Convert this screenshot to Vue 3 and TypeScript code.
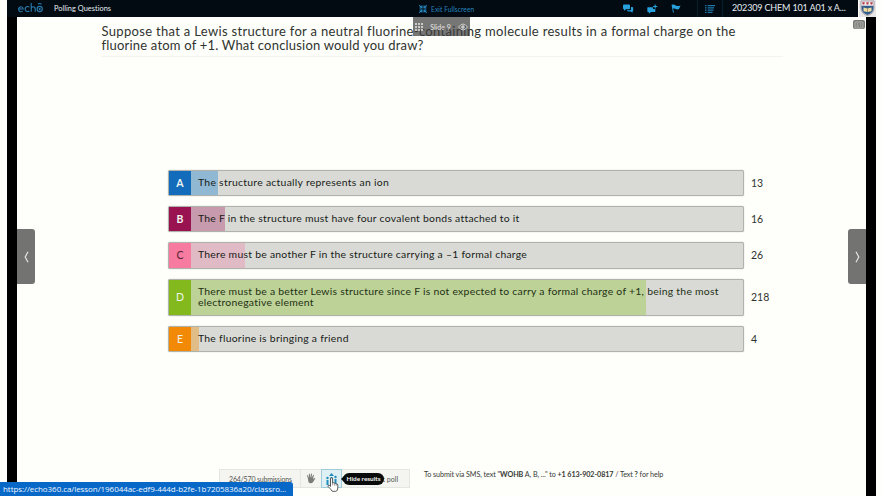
<script setup lang="ts">
interface Answer { key: string; text: string; votes: number; tone: string; fill: number }

const answers: Answer[] = [
  { key: 'A', text: 'The structure actually represents an ion', votes: 13, tone: 'blue', fill: 27 },
  { key: 'B', text: 'The F in the structure must have four covalent bonds attached to it', votes: 16, tone: 'plum', fill: 33.5 },
  { key: 'C', text: 'There must be another F in the structure carrying a –1 formal charge', votes: 26, tone: 'pink', fill: 54 },
  { key: 'D', text: 'There must be a better Lewis structure since F is not expected to carry a formal charge of +1, being the most\nelectronegative element', votes: 218, tone: 'green', fill: 455 },
  { key: 'E', text: 'The fluorine is bringing a friend', votes: 4, tone: 'orange', fill: 8 },
]
</script>

<template>
  <div class="screen">
    <header class="bar">
      <svg class="logo" viewBox="0 0 26 12" fill="none" stroke="#2a7db0" stroke-width="1.1">
        <path d="M.8 7H5.2A2.3 2.5 0 1 0 4.6 9M11.3 5.2A2.4 2.5 0 1 0 11.3 8.8M13.2 1V9.8M13.2 6.8Q13.4 4.7 15.2 4.7Q17.2 4.7 17.2 7V9.8M20 2.2Q21.7 .8 23.5 2.2" />
        <circle cx="21.7" cy="7" r="2.6" /><circle cx="21.7" cy="7" r=".5" />
      </svg>
      <span class="page-name">Polling Questions</span>
      <div class="exit">
        <svg width="8" height="8" viewBox="0 0 8 8" fill="none" stroke="#2585bd" stroke-width="1.1"><path d="M.2.2 3 3M3 .5V3H.5M7.8.2 5 3M5 .5V3H7.5M.2 7.8 3 5M3 7.5V5H.5M7.8 7.8 5 5M5 7.5V5H7.5" /></svg>
        <span>Exit Fullscreen</span>
      </div>
      <div class="tools">
        <svg width="11" height="9" viewBox="0 0 11 9" fill="#27a0dc"><path d="M1 .5H6Q7 .5 7 1.5V4.3Q7 5.2 6 5.2H3L1 6.8V5.2Q0 5.2 0 4.2V1.5Q0 .5 1 .5Z" /><path d="M8 3H9.2Q10.2 3 10.2 4V6.5Q10.2 7.2 9.5 7.4V8.8L7.8 7.4H4.8Q4 7.4 4 6.3H7Q8 6.3 8 5Z" /></svg>
        <svg width="11" height="10" viewBox="0 0 11 10" fill="#27a0dc"><path d="M.5 3.3H6V5H8.3V7.4Q8.3 8 7.5 8H4L1.8 9.8V8H1Q.3 8 .3 7.2V3.8ZM7.6.5H8.7V2H10.3V3.1H8.7V4.6H7.6V3.1H6.1V2H7.6Z" /></svg>
        <svg width="10" height="9" viewBox="0 0 10 9"><path d="M.5.7Q3-.1 4.8 1.4Q6.6 2.6 9.5 1.4L8 5.1Q6.2 5.9 4.4 4.8Q3.3 4.2 2 4.5L3 8.5H2Z" fill="#27a0dc" /></svg>
      </div>
      <div class="list-tool">
        <svg width="10" height="8" viewBox="0 0 10 8" stroke="#1d76a8" stroke-width="1.2"><path d="M0 .7H1.5M2.6.7H10M0 2.9H1.5M2.6 2.9H9M0 5.1H1.5M2.6 5.1H8.5M0 7.3H1.5M2.6 7.3H7.5" /></svg>
      </div>
      <span class="course">202309 CHEM 101 A01 x A...</span>
    </header>
    <svg class="crest" width="17" height="17" viewBox="0 0 17 17">
      <rect width="17" height="17" fill="#e9e6e7" />
      <path d="M2 1H15V8Q15 13.8 8.5 15.7Q2 13.8 2 8Z" fill="#f2eeee" stroke="#777480" stroke-width=".6" />
      <path d="M3.2 2.3H5.8L5.3 4.5H3.7ZM7.2 2.3H9.8L9.3 4.5H7.7ZM11.2 2.3H13.8L13.3 4.5H11.7Z" fill="#b53741" />
      <path d="M2.5 5.8H14.5V8Q14.5 13 8.5 15Q2.5 13 2.5 8Z" fill="#345c88" />
      <path d="M4.5 7.6 8.5 8.4 12.5 7.6V11.2L8.5 12 4.5 11.2Z" fill="#efdda3" /><path d="M8.5 8.4V12" stroke="#766548" stroke-width=".6" />
    </svg>

    <main class="slide">
      <h1 class="question"><span class="first">Suppose that a Lewis structure for a neutral fluorine-containing molecule results in a formal charge on the</span><br>fluorine atom of +1. What conclusion would you draw?</h1>

      <section class="answers">
        <div v-for="a in answers" :key="a.key" class="answer" :class="[a.tone, 'row-' + a.key]">
          <div class="box">
            <span class="letter">{{ a.key }}</span>
            <div class="body">
              <div class="fill" :style="{ width: a.fill + 'px' }"></div>
              <span class="text">{{ a.text }}</span>
            </div>
          </div>
          <span class="votes">{{ a.votes }}</span>
        </div>
      </section>

      <footer class="foot">
        <div class="controls">
          <span class="submissions">264/570 submissions</span>
          <span class="hand"><svg width="10" height="11" viewBox="0 0 10 11"><path d="M2 6 1 2.5Q1.2 1.8 1.8 2.3L3 5 2.8 1Q3.3.2 3.8 1L4.3 4.8 5 .8Q5.6.2 6 1L5.6 5 7.2 1.8Q7.9 1.6 7.9 2.4L6.9 6.1 8.7 4.9Q9.7 4.8 9.2 5.6L7 9.2Q5.5 10.7 3.5 10 2 9.3 2 6Z" fill="#7b7c79" /></svg></span>
          <span class="chart"><svg width="11" height="12" viewBox="0 0 11 12" fill="#218bbb"><path d="M.5 7H2.5V12H.5ZM4.5 4H6.5V12H4.5ZM8.5 6H10.5V12H8.5ZM5.5 0 8 3H3Z" /><circle cx="1.5" cy="5" r="1.2" /><circle cx="9.5" cy="4" r="1.2" /></svg></span>
          <span class="reset">Reset poll</span>
        </div>
        <p class="sms">To submit via SMS, text "<b>WOHB</b> A, B, ..." to <b>+1 613-902-0817</b> / Text <b>?</b> for help</p>
      </footer>
    </main>

    <div class="slide-tab">
      <svg width="8" height="8" viewBox="0 0 8 8" fill="#c9c9c9"><path d="M0 0H2V2H0ZM3 0H5V2H3ZM6 0H8V2H6ZM0 3H2V5H0ZM3 3H5V5H3ZM6 3H8V5H6ZM0 6H2V8H0ZM3 6H5V8H3ZM6 6H8V8H6Z" /></svg>
      <span>Slide 9</span>
      <svg width="10" height="8" viewBox="0 0 10 8" fill="none" stroke="#c9c9c9"><path d="M.5 4Q5-2 9.5 4Q5 10 .5 4Z" /><circle cx="5" cy="4" r="1.3" fill="#c9c9c9" /></svg>
    </div>
    <div class="caption-button"><svg width="10" height="8" viewBox="0 0 10 8" fill="none" stroke="#d4d4d0"><rect x="1" y="1" width="8" height="6" rx=".8" stroke-width=".7" /><path d="M2.5 3H4.3M5.5 3H7.5M2.5 5H5M6 5H7.5" stroke-width=".8" /></svg></div>
    <div class="arrow prev"><svg width="5" height="12" viewBox="0 0 5 12"><path d="M4 .7 1.2 6 4 11.3" fill="none" stroke="#e5e5e3" stroke-width="1.2" /></svg></div>
    <div class="arrow next"><svg width="5" height="12" viewBox="0 0 5 12"><path d="M1 .7 3.8 6 1 11.3" fill="none" stroke="#e5e5e3" stroke-width="1.2" /></svg></div>
    <div class="tooltip">Hide results</div>
    <svg class="cursor" width="12" height="15" viewBox="0 0 12 15"><path d="M3.5 9.5V2Q3.5.8 4.5.8T5.6 2V6Q6.2 5.2 7.2 6.3 8.3 5.6 9 6.9 10.8 6.5 10.8 8.5V11Q10.6 14.3 8.8 14.3H5.2Q4.4 12.7 1 9.4.9 7.9 2.2 8.2Z" fill="white" stroke="#333" stroke-width=".8" /><path d="M5.6 6V8.5M7.4 6.5V8.7M9.1 7V9" stroke="#555" stroke-width=".5" /></svg>
    <div class="link-preview">https://echo360.ca/lesson/196044ac-edf9-444d-b2fe-1b7205836a20/classro...</div>
  </div>
</template>

<style>
body { margin: 0; overflow: hidden; background: #fefefb; }
</style>

<style scoped>
* { box-sizing: border-box; }
svg { display: block; flex: none; }
.screen { position: relative; width: 883px; height: 496px; padding: 0 7px; background: #fefefb; overflow: hidden; font-family: Lato, "Liberation Sans", sans-serif; color: #20231f; white-space: nowrap; display: grid; grid-template-columns: 851px 18px; grid-template-rows: 17px 479px; }
.bar { height: 17px; background: #020a12; display: flex; align-items: center; color: #e7edf1; }
.logo { width: 26px; height: 12px; margin-left: 11px; margin-top: -2px; }
.page-name { font-size: 7.4px; margin-left: 10px; width: 57px; letter-spacing: .03px; line-height: 15px; height: 16px; }
.exit { display: flex; align-items: center; gap: 4px; margin-left: 308px; width: 70px; color: #2585bd; font-size: 6.7px; letter-spacing: .05px; line-height: 14px; height: 16px; }
.tools { display: flex; margin-left: 134px; width: 74px; gap: 13px; align-items: center; }
.list-tool { width: 26px; height: 17px; display: flex; align-items: center; justify-content: center; border-left: 1px solid #07202b; border-right: 1px solid #07202b; }
.course { margin-left: 9px; font-size: 9px; letter-spacing: -.16px; width: 114px; line-height: 16px; height: 17px; }
.crest { margin-left: 1px; }
.slide { grid-column: 1 / -1; width: 869px; border-left: 10px solid #000; border-right: 10px solid #000; background: #fefefb; height: 479px; display: flex; flex-direction: column; }
.question { margin: 8px 83px 0 84px; padding: 0 0 0 .5px; height: 32px; border-bottom: 1px solid #f3f3f0; font-weight: 400; font-size: 13px; line-height: 13.5px; letter-spacing: .2px; color: #30342f; }
.first { letter-spacing: .32px; }
.answers { margin: 113px 0 0 151px; display: flex; flex-direction: column; gap: 10px; }
.answer { display: flex; align-items: center; gap: 7px; height: 26.2px; }
.row-D { height: 37.5px; }
.box { width: 576px; height: 100%; border: 1px solid #afb3ac; border-width: 1.5px 1px; border-radius: 2px; display: flex; background: #d9dad5; box-shadow: 0 0 1px #9ca099; }
.letter { width: 22px; display: flex; align-items: center; justify-content: center; font-size: 10.5px; color: #eff4ee; background: var(--tone); font-weight: 700; }
.body { position: relative; flex: 1; display: flex; align-items: center; }
.fill { position: absolute; left: 0; top: 0; bottom: 0; background: var(--soft); }
.text { position: relative; top: -.5px; margin-left: 7px; font-size: 10.4px; line-height: 11px; letter-spacing: .26px; white-space: pre; color: #181b18; }
.row-A .text { letter-spacing: .28px; }
.row-D .text { color: #233014; }
.votes { font-size: 10.5px; color: #30342f; }
.blue { --tone: #126bbb; --soft: #91b8d2; }
.plum { --tone: #98134f; --soft: #c79aad; }
.pink { --tone: #f77aa1; --soft: #e0bac5; }
.green { --tone: #83b91d; --soft: #bdd297; }
.orange { --tone: #f28a08; --soft: #e0bd87; }
.pink .letter { color: #55202f; font-weight: 400; }
.green .letter, .orange .letter { font-weight: 400; }
.foot { margin-top: auto; height: 27px; margin-left: 202px; display: flex; }
.controls { width: 191px; height: 19px; display: flex; border: 1px solid #e5e5e2; background: #f4f4f1; font-size: 7px; line-height: 19px; color: #555852; }
.submissions { width: 81px; padding-left: 9px; border-right: 1px solid #e5e5e2; letter-spacing: -.18px; }
.hand { width: 20px; display: grid; place-items: center; }
.chart { width: 21px; display: grid; place-items: center; background: #dff0f4; border: 1px solid #a0cbdb; margin: -1px 0; }
.reset { padding-left: 26px; }
.sms { margin: .5px 0 0 14px; font-size: 7.2px; letter-spacing: -.08px; line-height: 10px; color: #363a34; }
.slide-tab { position: absolute; left: 413px; top: 17px; width: 57px; height: 19px; background: rgba(60, 60, 60, .7); display: flex; align-items: center; justify-content: center; gap: 7px; color: #e4e4e2; font-size: 7px; }
.caption-button { position: absolute; left: 853px; top: 20px; width: 12px; height: 9px; border-radius: 2px; background: #777975; display: grid; place-items: center; }
.arrow { position: absolute; top: 229px; width: 18px; height: 55px; background: #737472; display: grid; place-items: center; }
.prev { left: 17px; border-radius: 0 3px 3px 0; }
.next { left: 848px; border-radius: 3px 0 0 3px; }
.tooltip { position: absolute; left: 343px; top: 473px; width: 41px; height: 12px; border-radius: 6px; background: #090b0b; color: #f4f4f2; font-size: 6.4px; line-height: 11.5px; text-align: center; font-weight: 700; }
.tooltip::before { content: ''; position: absolute; left: -2px; top: 3px; border: 3px solid transparent; border-right-color: #090b0b; border-left: 0; }
.cursor { position: absolute; left: 327px; top: 477px; }
.link-preview { position: absolute; left: 0; top: 482px; width: 293px; height: 14px; border-radius: 0 3px 0 0; background: #0868c8; color: #eff7ff; padding-left: 3px; font-family: "Open Sans", sans-serif; font-size: 8px; letter-spacing: -.06px; line-height: 13px; }
</style>
